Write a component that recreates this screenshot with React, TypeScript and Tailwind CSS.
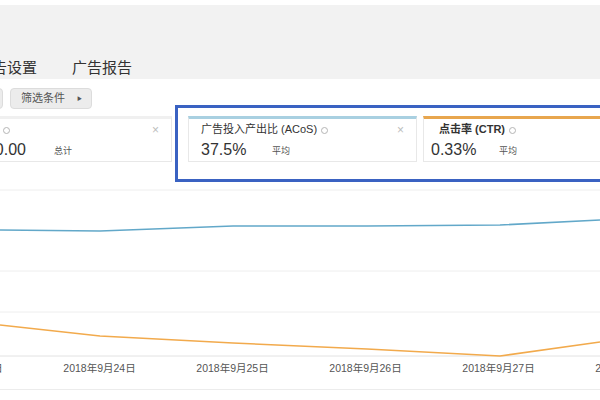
const blue = [
  [0, 68],
  [100, 69],
  [233, 64],
  [367, 64],
  [500, 63],
  [600, 58],
];
const orange = [
  [0, 163],
  [100, 174],
  [233, 181],
  [367, 187],
  [500, 194],
  [600, 180],
];
const toPath = (pts: number[][]) =>
  pts.map((p, i) => `${i === 0 ? "M" : "L"}${p[0]} ${p[1]}`).join(" ");

const dates = [
  "2018年9月23日",
  "2018年9月24日",
  "2018年9月25日",
  "2018年9月26日",
  "2018年9月27日",
  "2018年9月28日",
];

const Info = () => (
  <span className="inline-flex w-[7px] h-[7px] rounded-full border border-[#b5b5b5] ml-1 align-middle" />
);

const MetricCard = ({
  title,
  value,
  label,
  bar,
  bold,
  close,
  className,
  titleClass,
  valueClass,
}: {
  title: string;
  value: string;
  label: string;
  bar: string;
  bold?: boolean;
  close?: boolean;
  className: string;
  titleClass: string;
  valueClass: string;
}) => (
  <div className={`h-[46px] shrink-0 border border-[#e8e8e8] border-t-[3px] ${bar} ${className}`}>
    <div className={`flex justify-between items-center h-[17px] mt-[2px] pr-3 ${titleClass}`}>
      <span className={`text-[11px] text-[#333] whitespace-nowrap ${bold ? "font-bold" : ""}`}>
        {title}
        <Info />
      </span>
      {close && <span className="text-[12px] text-[#bdbdbd] leading-none">×</span>}
    </div>
    <div className="flex items-center h-[22px] mt-[1px]">
      <span className={`shrink-0 text-[16px] text-[#333] whitespace-nowrap ${valueClass}`}>
        {value}
      </span>
      <span className="text-[9px] text-[#555] mt-[3px]">{label}</span>
    </div>
  </div>
);

export default function App() {
  return (
    <div
      className="relative w-[600px] h-[400px] overflow-hidden bg-white"
      style={{ fontFamily: '"Liberation Sans", "Noto Sans CJK SC", sans-serif' }}
    >
      <div className="h-[5px] bg-white" />
      <div className="h-[74px] bg-[#f2f2f2] flex items-end">
        <div className="flex gap-[35px] ml-[-23px] text-[15px] text-[#333] leading-[22px]">
          <span>广告设置</span>
          <span>广告报告</span>
        </div>
      </div>

      <div className="flex gap-[7px] mt-[9px] h-[21px] ml-[-40px]">
        <div className="w-[43px] bg-[#ececec] border border-[#dcdcdc] rounded-sm" />
        <div className="w-[82px] bg-[#ececec] border border-[#dcdcdc] rounded-sm flex items-center pl-[10px] text-[11px] text-[#555]">
          <span>筛选条件</span>
          <span className="ml-[12px] text-[5px]">▶</span>
        </div>
      </div>

      <div className="flex mt-[7px]">
        <MetricCard
          title="花费"
          value="$10.00"
          label="总计"
          bar="border-t-[#f0f0f0]"
          close
          className="ml-[-36px] w-[208px]"
          titleClass="pl-3"
          valueClass="pl-3 w-[89px]"
        />
        <MetricCard
          title="广告投入产出比 (ACoS)"
          value="37.5%"
          label="平均"
          bar="border-t-[#a9d0e1]"
          close
          className="ml-[16px] w-[229px]"
          titleClass="pl-3"
          valueClass="pl-3 w-[83px]"
        />
        <MetricCard
          title="点击率 (CTR)"
          value="0.33%"
          label="平均"
          bar="border-t-[#e8a64e]"
          bold
          className="ml-[6px] w-[229px]"
          titleClass="pl-[15px]"
          valueClass="pl-[7px] w-[75px]"
        />
      </div>

      <svg width="600" height="195" className="block">
        {[28, 109, 150].map((y) => (
          <line key={y} x1="0" x2="600" y1={y} y2={y} stroke="#eeeeee" strokeWidth="1" />
        ))}
        <line x1="0" x2="600" y1="194" y2="194" stroke="#e2e2e2" strokeWidth="1" />
        <path d={toPath(blue)} fill="none" stroke="#62a8c9" strokeWidth="1.6" />
        <path d={toPath(orange)} fill="none" stroke="#f2aa4c" strokeWidth="1.6" />
      </svg>

      <div className="flex ml-[-100px] h-[24px] items-center">
        {dates.map((d) => (
          <span
            key={d}
            className="w-[133px] shrink-0 text-center text-[10.5px] text-[#555] whitespace-nowrap"
          >
            {d}
          </span>
        ))}
      </div>
      <div className="mt-[8px] border-t border-[#ececec]" />

      <div className="absolute left-[175px] top-[105px] w-[440px] h-[77px] border-[3px] border-[#3a62c2]" />
    </div>
  );
}
